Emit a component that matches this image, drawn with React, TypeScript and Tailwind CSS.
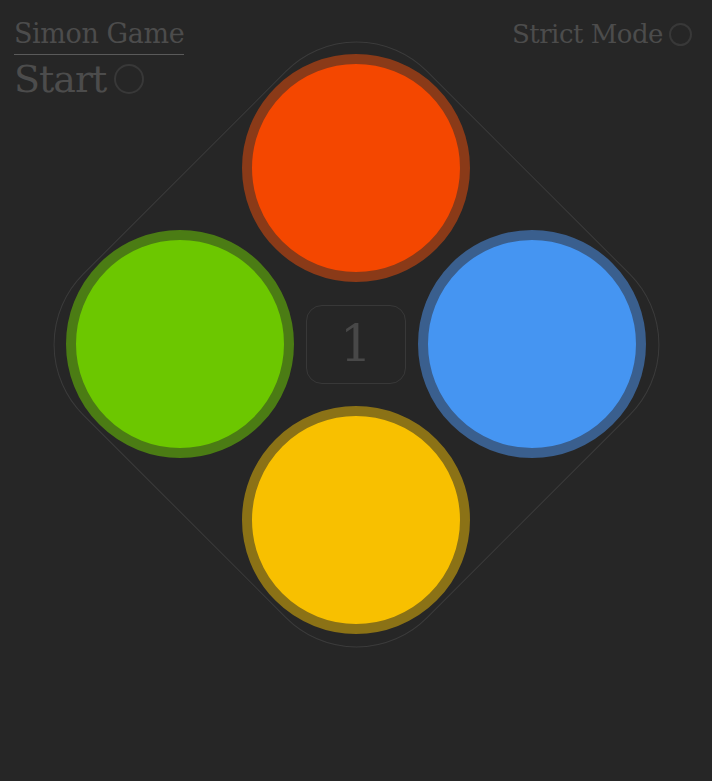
import React from "react";

const font = { fontFamily: '"DejaVu Serif", "Liberation Serif", serif' };

function Pad({ fill, ring }: { fill: string; ring: string }) {
  return (
    <div className="flex items-center justify-center">
      <div className={`-m-[26px] h-[228px] w-[228px] shrink-0 rounded-full border-[10px] ${ring} ${fill}`} />
    </div>
  );
}

export default function App() {
  return (
    <div className="h-[781px] w-[712px] overflow-hidden bg-[#262626] text-[#4c4c4c]" style={font}>
      <div className="flex items-start justify-between pl-[14px] pr-[20px] pt-[18px]">
        <div className="flex flex-col items-start">
          <div className="border-b border-[#5a5a5a] pb-[4px] text-[27px] leading-[32px] tracking-[-0.4px] font-light">Simon Game</div>
          <div className="flex items-center">
            <span className="text-[38px] leading-[48px] tracking-[-1px] font-light">Start</span>
            <span className="ml-[8px] h-[30px] w-[30px] rounded-full border-2 border-[#383838]" />
          </div>
        </div>
        <div className="flex items-center">
          <span className="text-[26px] leading-[32px] tracking-[-0.5px] font-light">Strict Mode</span>
          <span className="ml-[6px] h-[23px] w-[23px] rounded-full border-2 border-[#383838]" />
        </div>
      </div>
      <div className="mt-[-23px] flex justify-center">
        <div className="grid grid-cols-[176px_176px_176px] grid-rows-[176px_176px_176px]">
          <div className="col-start-1 col-span-3 row-start-1 row-span-3 flex items-center justify-center">
            <div className="h-[487px] w-[487px] shrink-0 rotate-45 rounded-[100px] border border-[#3b3b3b]" />
          </div>
          <div className="col-start-2 row-start-1 flex items-center justify-center">
            <Pad fill="bg-[#f44700]" ring="border-[#8a3a18]" />
          </div>
          <div className="col-start-1 row-start-2 flex items-center justify-center">
            <Pad fill="bg-[#6cc700]" ring="border-[#4b7c14]" />
          </div>
          <div className="col-start-2 row-start-2 flex items-center justify-center">
            <div className="flex h-[79px] w-[100px] items-center justify-center rounded-[16px] border border-[#383838] text-[50px] font-light text-[#484848]">
              1
            </div>
          </div>
          <div className="col-start-3 row-start-2 flex items-center justify-center">
            <Pad fill="bg-[#4595f2]" ring="border-[#3a5f8e]" />
          </div>
          <div className="col-start-2 row-start-3 flex items-center justify-center">
            <Pad fill="bg-[#f8c000]" ring="border-[#8b7216]" />
          </div>
        </div>
      </div>
    </div>
  );
}
